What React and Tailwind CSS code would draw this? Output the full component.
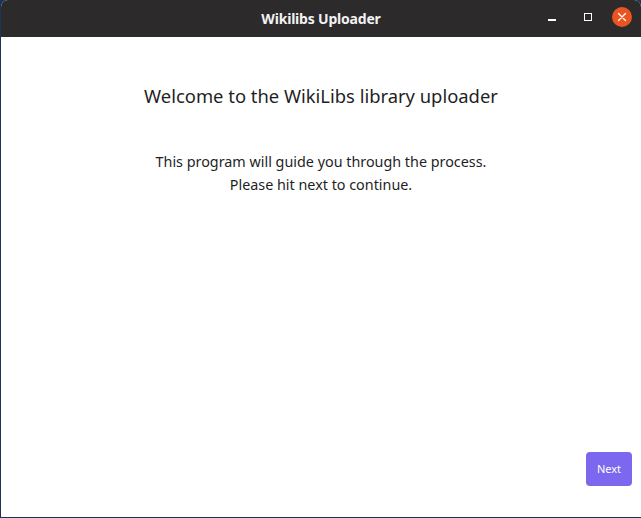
import React from 'react';

const App = () => {
  return (
    <div className="w-[641px] h-[518px] bg-[#1b3556] overflow-hidden" style={{ fontFamily: '"Noto Sans", "Open Sans", sans-serif' }}>
      <div className="ml-px h-[517px] flex flex-col bg-white rounded-tr-[7px] rounded-tl-[7px] overflow-hidden">
        {/* title bar */}
        <div className="h-[37px] shrink-0 bg-[#2c2a2a] flex items-center relative">
          <div className="flex-1 text-center text-[14px] font-bold text-[#f2f2f2] tracking-[-0.2px]">Wikilibs Uploader</div>
          <div className="absolute right-[9px] top-[7px] flex items-center gap-[14px]">
            <div className="w-[20px] h-[20px] flex items-center justify-center mr-[2px]">
              <div className="w-[8px] h-[1.5px] bg-white mt-[6px]" />
            </div>
            <div className="w-[20px] h-[20px] flex items-center justify-center">
              <div className="w-[8px] h-[8px] border border-white" />
            </div>
            <div className="w-[20px] h-[20px] rounded-full bg-[#e95420] flex items-center justify-center">
              <svg width="10" height="10" viewBox="0 0 10 10">
                <path d="M1.5 1.5 L8.5 8.5 M8.5 1.5 L1.5 8.5" stroke="white" strokeWidth="1.3" strokeLinecap="round" />
              </svg>
            </div>
          </div>
        </div>

        {/* content */}
        <div className="flex-1 flex flex-col items-center text-[#1f1f1f]">
          <h1 className="mt-[46px] text-[18.4px] leading-[26px]">Welcome to the WikiLibs library uploader</h1>
          <div className="mt-[41px] text-[14.35px] leading-[23px] text-center">
            <p>This program will guide you through the process.</p>
            <p>Please hit next to continue.</p>
          </div>
          <div className="flex-1" />
          <div className="self-end mr-[9px] mb-[31px]">
            <button className="w-[46px] h-[34px] rounded-[4px] bg-[#7b68ee] text-white text-[11px]">Next</button>
          </div>
        </div>
      </div>
    </div>
  );
};

export default App;
